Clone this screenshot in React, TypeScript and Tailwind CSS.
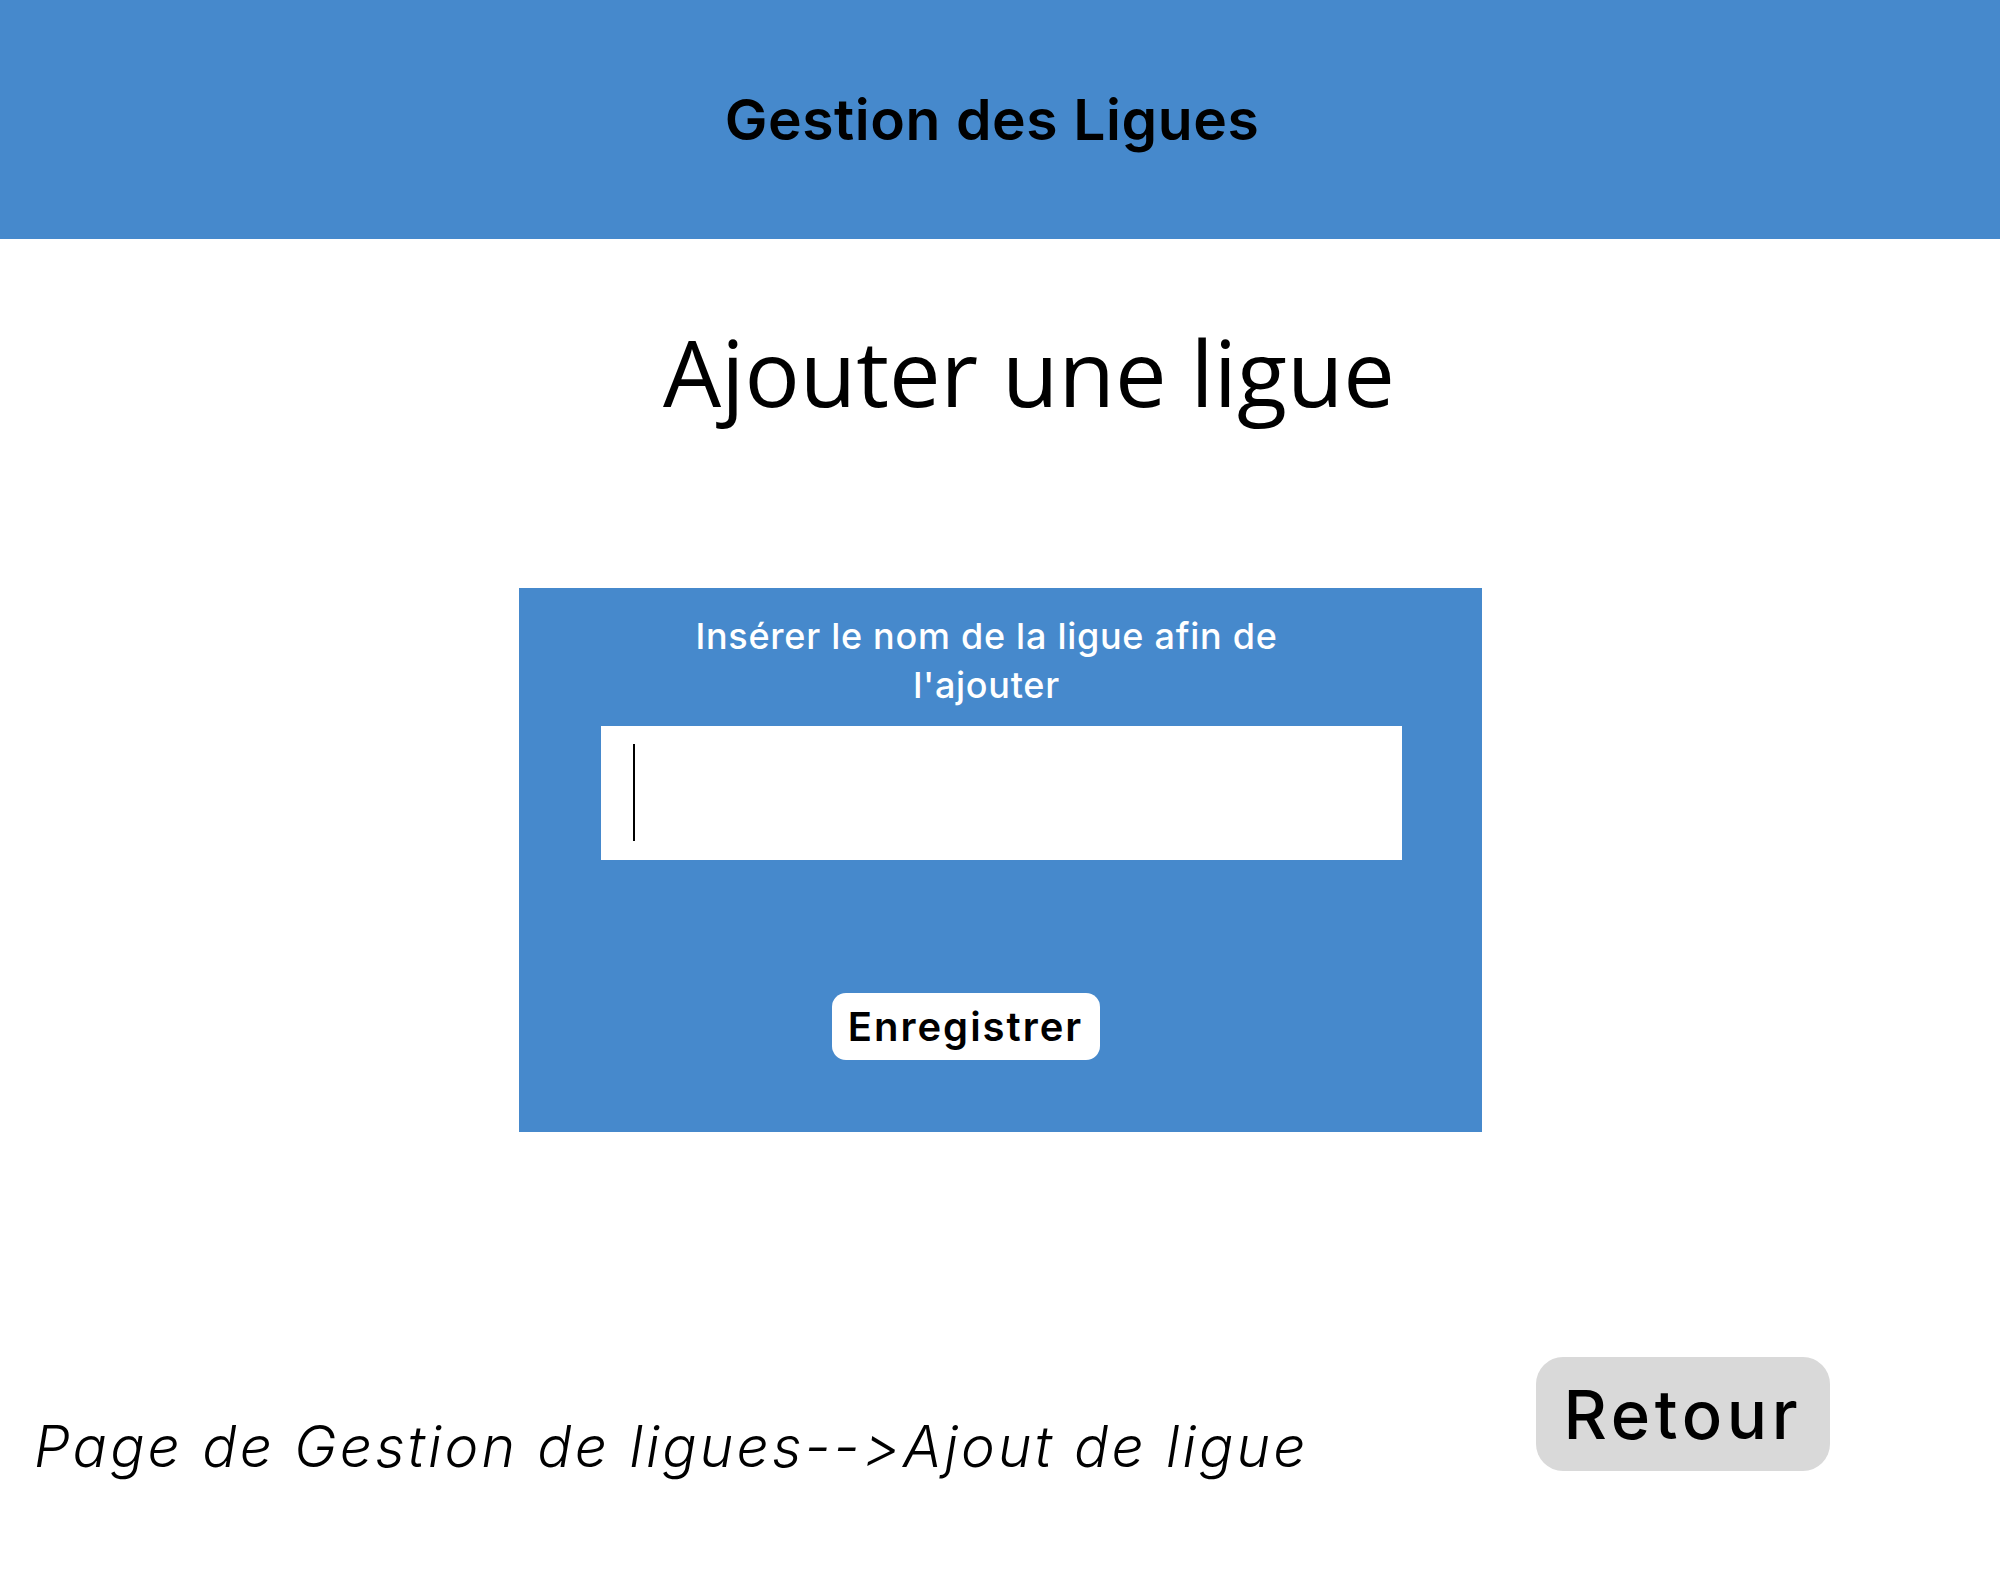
export default function App() {
  return (
    <div className="flex min-h-[1570px] w-full flex-col bg-white font-['Inter',sans-serif] text-black [font-variant-ligatures:none]">
      <header className="flex h-[239px] shrink-0 items-center justify-center bg-[#4689cc] pr-[16px]">
        <h1 className="text-[57px] leading-none font-semibold tracking-[0.01em]">Gestion des Ligues</h1>
      </header>

      <h2 className="mt-[87px] pl-[58px] text-center font-['Open_Sans',sans-serif] text-[92px] leading-none font-normal">
        Ajouter une ligue
      </h2>

      <section className="mx-auto mt-[170px] flex h-[544px] w-[963px] flex-col items-start bg-[#4689cc]">
        <p className="mt-[24px] ml-[156px] w-[624px] text-center text-[36px] leading-[49px] font-medium tracking-[0.02em] text-white">
          Insérer le nom de la ligue afin de
          <br />
          l'ajouter
        </p>
        <div className="mt-[16px] ml-[82px] flex h-[134px] w-[801px] items-start bg-white pt-[18px] pl-[32px]">
          <span className="block h-[97px] w-[2px] bg-black" />
        </div>
        <button className="mt-[133px] ml-[313px] h-[67px] w-[268px] rounded-[14px] bg-white text-[40px] leading-none font-semibold tracking-[0.05em] text-black">
          Enregistrer
        </button>
      </section>

      <footer className="mt-[225px] flex items-start justify-between pr-[170px] pl-[34px]">
        <p className="mt-[61px] text-[57px] leading-none font-light tracking-[0.055em] italic">
          Page de Gestion de ligues--&gt;Ajout de ligue
        </p>
        <button className="h-[114px] w-[294px] rounded-[27px] bg-[#d9d9d9] text-[67px] leading-none font-medium tracking-[0.07em] text-black">
          Retour
        </button>
      </footer>
    </div>
  );
}
